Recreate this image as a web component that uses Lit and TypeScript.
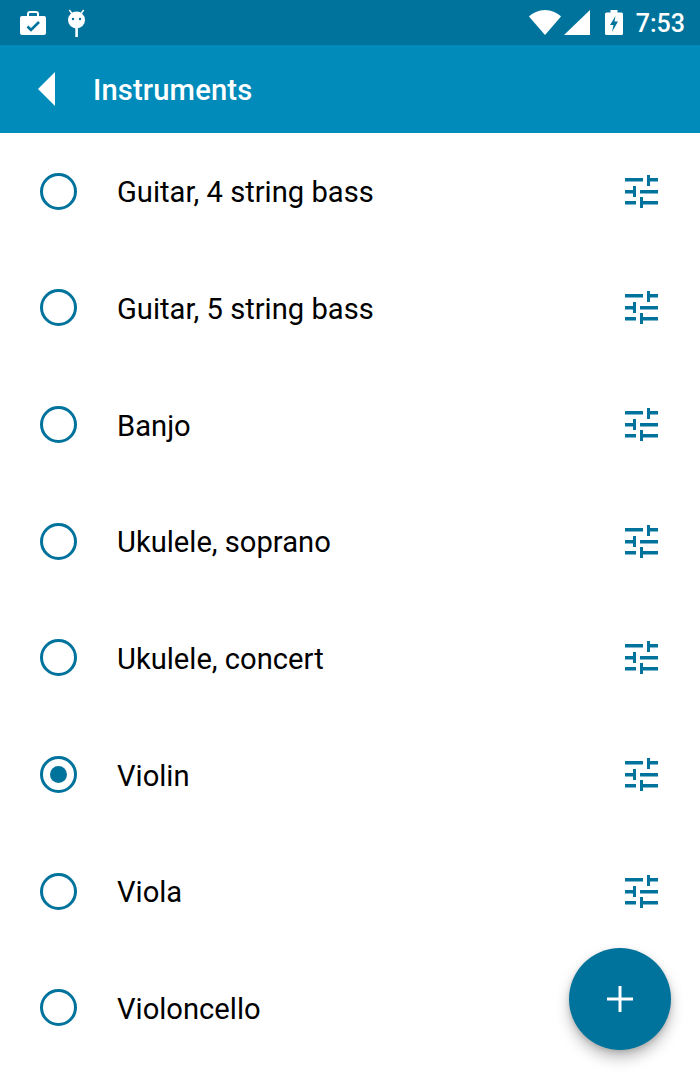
import { LitElement, html, css } from "lit";
import { customElement } from "lit/decorators.js";

const items = [
  "Guitar, 4 string bass",
  "Guitar, 5 string bass",
  "Banjo",
  "Ukulele, soprano",
  "Ukulele, concert",
  "Violin",
  "Viola",
  "Violoncello",
];

@customElement("app-root")
export class AppRoot extends LitElement {
  static styles = css`
    :host {
      display: block;
      position: relative;
      width: 700px;
      height: 1079px;
      overflow: hidden;
      background: #fff;
      font-family: Roboto, "Liberation Sans", sans-serif;
    }
    .status {
      height: 45px;
      background: #00739c;
      display: flex;
      align-items: center;
      padding: 0 15px 0 20px;
      color: #fff;
      box-sizing: border-box;
    }
    .status svg { display: block; fill: #fff; }
    .brief { width: 26px; height: 24px; margin-right: 21px; }
    .droid { width: 19px; height: 28px; margin-top: 1px; }
    .spacer { flex: 1; }
    .wifi { width: 32px; height: 25px; margin-right: 3px; }
    .signal { width: 26px; height: 25px; margin-right: 15px; }
    .batt { width: 18px; height: 25px; margin-right: 13px; }
    .time { font-size: 25px; font-weight: 500; line-height: 45px; padding-top: 1px; }
    .bar {
      height: 88px;
      background: #008bbb;
      display: flex;
      align-items: center;
      padding-left: 38px;
      color: #fff;
      box-sizing: border-box;
    }
    .back { width: 17px; height: 34px; margin-right: 38px; fill: #fff; display: block; }
    .title { font-size: 29.17px; font-weight: 500; letter-spacing: 0.15px; padding-top: 2px; }
    .row {
      height: 116.67px;
      display: flex;
      align-items: center;
      padding: 0 42px 0 40px;
      box-sizing: border-box;
    }
    .radio {
      width: 37px;
      height: 37px;
      border: 3.5px solid #00739c;
      border-radius: 50%;
      box-sizing: border-box;
      display: flex;
      align-items: center;
      justify-content: center;
      margin-right: 40px;
      flex: none;
    }
    .dot { width: 17px; height: 17px; border-radius: 50%; background: #00739c; }
    .label { flex: 1; font-size: 29.17px; color: #000; padding-top: 2px; }
    .tune { width: 33px; height: 33px; fill: #00739c; display: block; flex: none; }
    .fab {
      position: absolute;
      left: 569px;
      top: 948px;
      width: 102px;
      height: 102px;
      border-radius: 50%;
      background: #00739c;
      box-shadow: 0 8px 14px rgba(0, 0, 0, 0.25), 0 2px 5px rgba(0, 0, 0, 0.15);
      display: flex;
      align-items: center;
      justify-content: center;
    }
    .fab svg { width: 26px; height: 26px; fill: #fff; display: block; }
  `;

  private tune() {
    return html`<svg class="tune" viewBox="0 0 33 33">
      <path d="M0 3h18v3.600H0zM22 0h3v3h8v3.600h-8V11h-3zM0 15h8v3.500H0zM8 11h3v11H8zM15 15h18v3.500H15zM0 26h11v3.500H0zM15 22h3v4h15v3.500H18V33h-3z"/>
    </svg>`;
  }

  render() {
    return html`
      <div class="status">
        <svg class="brief" viewBox="0 0 26 24">
          <path fill-rule="evenodd" d="M7 5V3a3 3 0 0 1 3-3h6a3 3 0 0 1 3 3v2h5a2 2 0 0 1 2 2v15a2 2 0 0 1-2 2H2a2 2 0 0 1-2-2V7a2 2 0 0 1 2-2h5zm2-2.200V5h8V2.800a.8.8 0 0 0-.8-.8H9.800a.8.8 0 0 0-.8.800z"/>
          <path d="M7.500 15.500 11 19l8-8" fill="none" stroke="#00739c" stroke-width="2.600"/>
        </svg>
        <svg class="droid" viewBox="0 0 19 28">
          <circle cx="9.500" cy="11" r="8.500"/>
          <path d="M8.300 18h2.600v10H8.300z"/>
          <path d="M5 4.500 2.300 1M14 4.500 16.700 1" stroke="#fff" stroke-width="1.500" fill="none"/>
          <circle cx="6" cy="10" r="1.200" fill="#00739c"/>
          <circle cx="13" cy="10" r="1.200" fill="#00739c"/>
        </svg>
        <div class="spacer"></div>
        <svg class="wifi" viewBox="0 0 32 25">
          <path d="M16 25 0 6.500C3.500 3 9.500 0 16 0s12.500 3 16 6.500L16 25z"/>
        </svg>
        <svg class="signal" viewBox="0 0 26 25"><path d="M26 0v25H0L26 0z"/></svg>
        <svg class="batt" viewBox="0 0 18 25">
          <path d="M5.500 0h7v2.500h4A1.500 1.500 0 0 1 18 4v19.500a1.500 1.500 0 0 1-1.500 1.500h-15A1.500 1.500 0 0 1 0 23.500V4a1.500 1.500 0 0 1 1.500-1.500h4V0z"/>
          <path d="M10.500 6 5 15h3.500L7 22l6-10.500H9.500L10.500 6z" fill="#00739c"/>
        </svg>
        <span class="time">7:53</span>
      </div>
      <div class="bar">
        <svg class="back" viewBox="0 0 17 34"><path d="M17 0v34L0 17 17 0z"/></svg>
        <span class="title">Instruments</span>
      </div>
      ${items.map(
        (t) => html`<div class="row">
          <div class="radio">${t === "Violin" ? html`<div class="dot"></div>` : ""}</div>
          <span class="label">${t}</span>
          ${this.tune()}
        </div>`
      )}
      <div class="fab">
        <svg viewBox="0 0 26 26"><path d="M11.500 0h3v11.500H26v3H14.500V26h-3V14.500H0v-3h11.500z"/></svg>
      </div>
    `;
  }
}
